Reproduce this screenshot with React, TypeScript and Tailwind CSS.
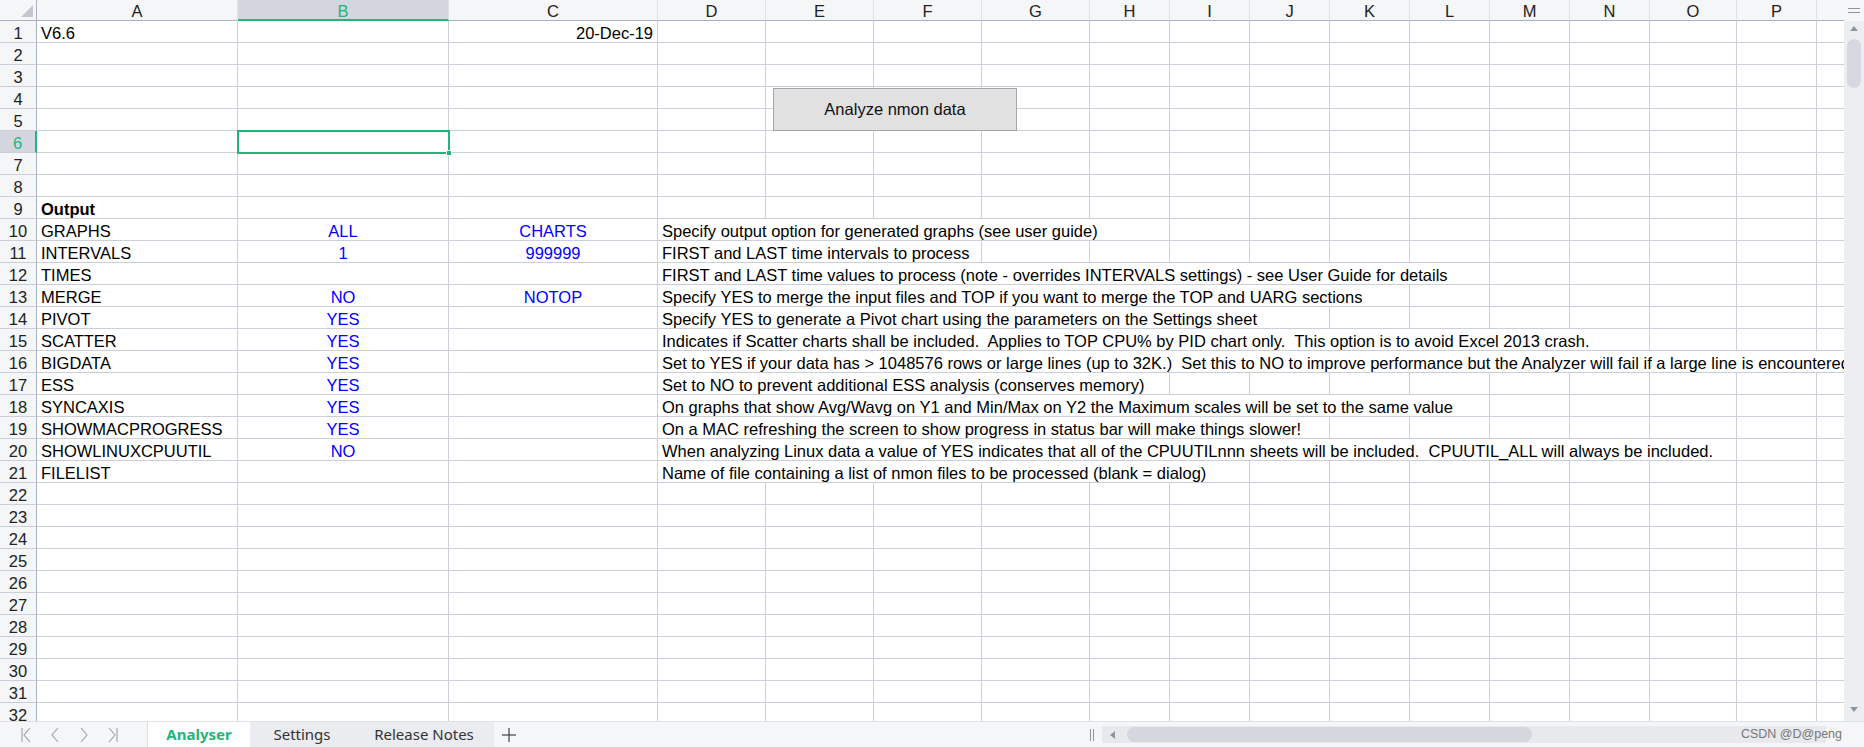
import React from 'react'

type Col = { k: string; w: number }

const COLS: Col[] = [
  { k: 'A', w: 201 },
  { k: 'B', w: 211 },
  { k: 'C', w: 209 },
  { k: 'D', w: 108 },
  { k: 'E', w: 108 },
  { k: 'F', w: 108 },
  { k: 'G', w: 108 },
  { k: 'H', w: 80 },
  { k: 'I', w: 80 },
  { k: 'J', w: 80 },
  { k: 'K', w: 80 },
  { k: 'L', w: 80 },
  { k: 'M', w: 80 },
  { k: 'N', w: 80 },
  { k: 'O', w: 87 },
  { k: 'P', w: 80 },
  { k: 'Q', w: 80 },
]

interface Row {
  a?: string
  bold?: boolean
  b?: string
  c?: string
  cRight?: boolean
  d?: string
  span?: number
}

const ROWS: Record<number, Row> = {
  1: { a: 'V6.6', c: '20-Dec-19', cRight: true },
  9: { a: 'Output', bold: true },
  10: { a: 'GRAPHS', b: 'ALL', c: 'CHARTS', d: 'Specify output option for generated graphs (see user guide)', span: 5 },
  11: { a: 'INTERVALS', b: '1', c: '999999', d: 'FIRST and LAST time intervals to process', span: 3 },
  12: { a: 'TIMES', d: 'FIRST and LAST time values to process (note - overrides INTERVALS settings) - see User Guide for details', span: 9 },
  13: { a: 'MERGE', b: 'NO', c: 'NOTOP', d: 'Specify YES to merge the input files and TOP if you want to merge the TOP and UARG sections', span: 8 },
  14: { a: 'PIVOT', b: 'YES', d: 'Specify YES to generate a Pivot chart using the parameters on the Settings sheet', span: 7 },
  15: { a: 'SCATTER', b: 'YES', d: 'Indicates if Scatter charts shall be included.  Applies to TOP CPU% by PID chart only.  This option is to avoid Excel 2013 crash.', span: 11 },
  16: { a: 'BIGDATA', b: 'YES', d: 'Set to YES if your data has > 1048576 rows or large lines (up to 32K.)  Set this to NO to improve performance but the Analyzer will fail if a large line is encountered', span: 14 },
  17: { a: 'ESS', b: 'YES', d: 'Set to NO to prevent additional ESS analysis (conserves memory)', span: 5 },
  18: { a: 'SYNCAXIS', b: 'YES', d: 'On graphs that show Avg/Wavg on Y1 and Min/Max on Y2 the Maximum scales will be set to the same value', span: 9 },
  19: { a: 'SHOWMACPROGRESS', b: 'YES', d: 'On a MAC refreshing the screen to show progress in status bar will make things slower!', span: 7 },
  20: { a: 'SHOWLINUXCPUUTIL', b: 'NO', d: 'When analyzing Linux data a value of YES indicates that all of the CPUUTILnnn sheets will be included.  CPUUTIL_ALL will always be included.', span: 12 },
  21: { a: 'FILELIST', d: 'Name of file containing a list of nmon files to be processed (blank = dialog)', span: 6 },
}

const cell = 'shrink-0 h-[22px] border-r border-b border-[#cbcfd9] px-[4px] pt-[3px] leading-[18px] whitespace-pre'

function SheetRow({ n }: { n: number }) {
  const r = ROWS[n] ?? {}
  const active = n === 6
  const rest = COLS.slice(3)
  const span = r.d ? r.span ?? 1 : 0
  const dWidth = rest.slice(0, span).reduce((s, c) => s + c.w, 0)

  return (
    <div className="flex">
      <div
        className={`shrink-0 w-[37px] h-[22px] border-b text-center pt-[3px] leading-[18px] ${
          active
            ? 'bg-[#d3d6de] text-[#21b57a] border-b-[#cbcfd9] border-r-2 border-r-[#21b57a]'
            : 'bg-[#f5f6f8] text-[#222] border-b-[#cbcfd9] border-r border-r-[#a9b0bf]'
        }`}
      >
        {n}
      </div>
      <div className={`${cell} w-[201px] ${r.bold ? 'font-bold' : ''}`}>{r.a}</div>
      <div className={`${cell} w-[211px] text-center text-[#0000ff]`}>{r.b}</div>
      <div className={`${cell} w-[209px] ${r.cRight ? 'text-right text-black' : 'text-center text-[#0000ff]'}`}>{r.c}</div>
      {r.d && (
        <div className={`${cell} overflow-visible`} style={{ width: dWidth }}>
          {r.d}
        </div>
      )}
      {rest.slice(span).map(c => (
        <div key={c.k} className={cell} style={{ width: c.w }} />
      ))}
    </div>
  )
}

function NavIcon({ kind }: { kind: 'first' | 'prev' | 'next' | 'last' }) {
  return (
    <svg width="12" height="18" viewBox="0 0 12 18" fill="none" stroke="#9aa0aa" strokeWidth="1.1">
      {kind === 'first' && (
        <>
          <line x1="2" y1="2" x2="2" y2="16" />
          <polyline points="10,2 4,9 10,16" />
        </>
      )}
      {kind === 'prev' && <polyline points="9,2 3,9 9,16" />}
      {kind === 'next' && <polyline points="3,2 9,9 3,16" />}
      {kind === 'last' && (
        <>
          <polyline points="2,2 8,9 2,16" />
          <line x1="10" y1="2" x2="10" y2="16" />
        </>
      )}
    </svg>
  )
}

export default function App() {
  const rowNums = Array.from({ length: 32 }, (_, i) => i + 1)

  return (
    <div
      className="w-[1864px] h-[747px] overflow-hidden bg-white flex flex-col text-[16.5px] text-black"
      style={{ fontFamily: '"Liberation Sans", Arial, sans-serif' }}
    >
      <div className="flex h-[721px] shrink-0">
        {/* sheet */}
        <div className="relative w-[1844px] h-[721px] overflow-hidden">
          {/* column headers */}
          <div className="flex h-[21px]">
            <div className="relative shrink-0 w-[37px] h-[21px] bg-[#f5f6f8] border-r border-b border-[#a9b0bf]">
              <svg className="absolute left-[21px] top-[5px]" width="12" height="12" viewBox="0 0 12 12">
                <polygon points="12,0 12,12 0,12" fill="#c3c6cd" />
              </svg>
            </div>
            {COLS.map(c => (
              <div
                key={c.k}
                className={`shrink-0 h-[21px] text-center pt-[2px] leading-[18px] border-r ${
                  c.k === 'B'
                    ? 'bg-[#d3d6de] text-[#21b57a] border-r-[#dfe1e6] border-b-2 border-b-[#21b57a]'
                    : 'bg-[#f5f6f8] text-[#222] border-r-[#dfe1e6] border-b border-b-[#a9b0bf]'
                }`}
                style={{ width: c.w }}
              >
                {c.k}
              </div>
            ))}
          </div>

          {rowNums.map(n => (
            <SheetRow key={n} n={n} />
          ))}

          {/* selected cell B6 */}
          <div className="absolute left-[237px] top-[130px] w-[213px] h-[24px] border-2 border-[#21b57a]" />
          <div className="absolute left-[446px] top-[150px] w-[6px] h-[6px] bg-[#21b57a] border border-white" />

          {/* macro button */}
          <div className="absolute left-[773px] top-[88px] w-[244px] h-[43px] bg-[#e1e1e1] border border-[#a6a6a6] flex items-center justify-center text-[16.5px] text-[#111]">
            Analyze nmon data
          </div>
        </div>

        {/* vertical scrollbar */}
        <div className="w-[20px] flex flex-col bg-[#eceef2]">
          <div className="h-[21px] bg-[#f5f6f8] flex flex-col items-center justify-center gap-[3px]">
            <div className="w-[12px] h-[1px] bg-[#8f95a0]" />
            <div className="w-[12px] h-[1px] bg-[#8f95a0]" />
          </div>
          <div className="flex justify-center pt-[4px]">
            <svg width="8" height="6" viewBox="0 0 8 6">
              <polygon points="4,1 8,6 0,6" fill="#8f95a0" />
            </svg>
          </div>
          <div className="mx-auto mt-[8px] w-[14px] h-[49px] rounded-full bg-[#d5d8de]" />
          <div className="flex-1" />
          <div className="flex justify-center pb-[8px]">
            <svg width="8" height="6" viewBox="0 0 8 6">
              <polygon points="0,0 8,0 4,5" fill="#8f95a0" />
            </svg>
          </div>
        </div>
      </div>

      {/* sheet tab bar */}
      <div
        className="relative flex h-[26px] bg-[#f5f6f8] border-t border-[#dfe1e6]"
        style={{ fontFamily: '"Noto Sans", "Open Sans", sans-serif' }}
      >
        <div className="w-[148px] flex items-center gap-[17px] pl-[20px] border-r border-[#dfe1e6]">
          <NavIcon kind="first" />
          <NavIcon kind="prev" />
          <NavIcon kind="next" />
          <NavIcon kind="last" />
        </div>
        <div className="w-[102px] bg-white flex items-center justify-center text-[15px] font-bold text-[#21b57a]">
          Analyser
        </div>
        <div className="w-[244px] bg-[#ebecf0] flex items-center text-[15px] text-[#333]">
          <div className="w-[104px] text-center">Settings</div>
          <div className="w-[140px] text-center">Release Notes</div>
        </div>
        <div className="w-[30px] flex items-center justify-center">
          <svg width="16" height="16" viewBox="0 0 16 16" stroke="#444" strokeWidth="1.2">
            <line x1="8" y1="1" x2="8" y2="15" />
            <line x1="1" y1="8" x2="15" y2="8" />
          </svg>
        </div>
        <div className="flex-1" />

        {/* horizontal scrollbar */}
        <div className="flex items-center pr-[38px]">
          <div className="flex gap-[2px] mr-[8px]">
            <div className="w-[1px] h-[12px] bg-[#8f95a0]" />
            <div className="w-[1px] h-[12px] bg-[#8f95a0]" />
          </div>
          <div className="relative w-[724px] h-[17px] bg-[#e8e9ed] flex items-center">
            <svg className="ml-[8px]" width="5" height="8" viewBox="0 0 5 8">
              <polygon points="0,4 5,0 5,8" fill="#8f95a0" />
            </svg>
            <div className="ml-[12px] w-[405px] h-[15px] rounded-full bg-[#d5d7de]" />
          </div>
        </div>
        <div
          className="absolute right-[22px] top-[3px] text-[12.5px] text-[#777]"
          style={{ fontFamily: '"Liberation Sans", Arial, sans-serif' }}
        >
          CSDN @D@peng
        </div>
      </div>
    </div>
  )
}
